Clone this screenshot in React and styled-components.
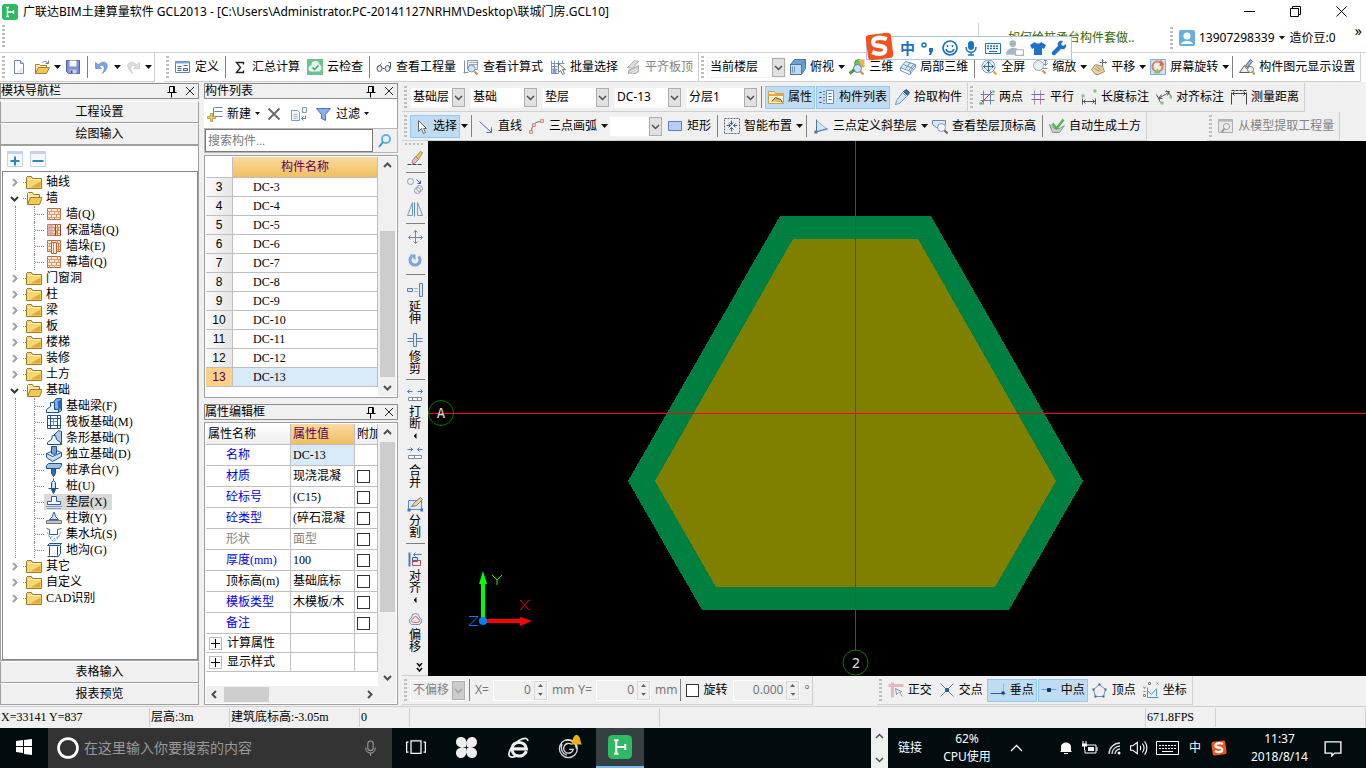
import styled, { createGlobalStyle, css } from "styled-components";

const GlobalStyle = createGlobalStyle`
  * {
    box-sizing: border-box;
  }

  body {
    margin: 0;
    background: #f0f0f0;
    font-family: "Noto Sans", "Noto Sans CJK SC", sans-serif;
    font-size: 12px;
    line-height: 16px;
    color: #000;
  }

  button,
  input,
  select {
    margin: 0;
    padding: 0;
    border: none;
    border-radius: 0;
    background: none;
    font: inherit;
    color: inherit;
  }

  svg {
    display: block;
    flex: none;
  }
`;

const songti = css`
  font-family: "Liberation Serif", "Noto Sans CJK SC", serif;
`;

/* ---------- icons ---------- */

const wall = (
  <>
    <path d="M1 2h13v11H1z" fill="#fdeee0" stroke="#c4643a" />
    <path
      d="M1 5h13M1 8h13M1 11h13M5 2v3M11 2v3M3 5v3M8 5v3M12 5v3M5 8v3M10 8v3M3 11v2M8 11v2"
      stroke="#e39a68"
      fill="none"
    />
  </>
);

const glyphs = {
  fresh: (
    <>
      <path d="M3 1h6l3 3v10H3z" fill="#fff" stroke="#7289a8" />
      <path d="M9 1v3h3" fill="#cfdcef" stroke="#7289a8" />
      <path d="M5 13h6V8z" fill="#dfe8f5" />
    </>
  ),
  open: (
    <>
      <path d="M1 14V5h4l1 1h6v2" fill="#fbe9a6" stroke="#a8842e" />
      <path d="M1 14l3-6h11l-3 6z" fill="#f2c55c" stroke="#a8842e" />
      <path d="M8 3c3-2 4-1 6 1m0-3v3h-3" fill="none" stroke="#5d7ea8" />
    </>
  ),
  save: (
    <>
      <path d="M1 1h13v13H3l-2-2z" fill="#7f8ed8" stroke="#5060ad" />
      <path d="M4 1h7v6H4z" fill="#f4f7fd" />
      <path d="M4 10h7v4H4z" fill="#c9d0ec" />
      <path d="M5 11h2v3H5z" fill="#45529c" />
    </>
  ),
  undo: (
    <path d="M1 3v6h6L5 7c3-3 7 0 3 7 7-5 6-13-1-11L4 5z" fill="#7ba2e6" stroke="#5880cb" strokeWidth=".6" />
  ),
  redo: (
    <path d="M14 3v6H8l2-2C7 4 3 7 7 14 0 9 1 1 8 3l3 2z" fill="#dedede" stroke="#c2c2c2" strokeWidth=".6" />
  ),
  define: (
    <>
      <path d="M0 2h14v11H0z" fill="#fff" stroke="#5f83bd" />
      <path d="M0 2h14v2H0z" fill="#7fa5df" />
      <path d="M2 7h4M2 9h4M2 11h4M8 6h4" stroke="#4d607c" />
      <path d="M8 9h4v2H8z" fill="none" stroke="#4d607c" />
    </>
  ),
  sigma: <path d="M11 5V3H4l4 5-4 5h7v-2" fill="none" stroke="#222" strokeWidth="1.4" />,
  cloudCheck: (
    <>
      <path d="M-1-1h17v17H-1z" fill="#6cc48d" />
      <path d="M4 12a3 3 0 0 1 0-6 4 4 0 0 1 8-1 4 4 0 0 1 0 7z" fill="#e9f7ee" />
      <path d="M5 8l2 2 4-4" fill="none" stroke="#3f9c66" strokeWidth="1.5" />
    </>
  ),
  glasses: (
    <>
      <ellipse cx="3" cy="9" rx="2.500" ry="3" fill="#e4e9ef" stroke="#4f5a68" />
      <ellipse cx="11" cy="9" rx="2.500" ry="3" fill="#e4e9ef" stroke="#4f5a68" />
      <path d="M6 9h2M1 8l4-4M14 9V3h-2" fill="none" stroke="#4f5a68" />
    </>
  ),
  formula: (
    <>
      <path d="M4 1h10v9H4z" fill="#f3f4f7" stroke="#8d95a5" />
      <path d="M6 3h1M8 3h1M10 3h1M12 3h1M6 5h1M8 5h1M10 5h1M12 5h1M6 7h1M8 7h1" stroke="#545e70" />
      <path d="M1 1v13M0 13h5" stroke="#7f93b5" />
      <circle cx="8" cy="9" r="3.500" fill="#cfe4f9" stroke="#7f93b5" />
      <path d="M11 12l3 3" stroke="#d98b3c" strokeWidth="2" />
    </>
  ),
  batch: (
    <>
      <path d="M1 1v13h7M1 4h13M4 1v13M8 1v6M12 1v3M1 7h6M1 10h6" fill="none" stroke="#7d93b5" />
      <path d="M2 9h4v5H2z" fill="#7b9cd2" />
      <path d="M8 4v9l2-2 2 4 2-1-2-4h3z" fill="#fff" stroke="#555" strokeWidth=".8" />
    </>
  ),
  flush: (
    <>
      <path d="M2 8l7-7 4 1-6 7z" fill="#dcdcdc" stroke="#b0b0b0" />
      <path d="M3 14v-3l10-5v6l-3 2z" fill="#c9c9c9" stroke="#b0b0b0" />
      <path d="M5 12l7-3M6 14l6-3" stroke="#f0f0f0" />
    </>
  ),
  cube: (
    <>
      <path d="M0 5l4-5h11v9l-4 6H0z" fill="#6d9fd3" stroke="#4d76a4" />
      <path d="M0 5h11v10H0z" fill="#bcdcf5" stroke="#4d76a4" />
      <path d="M11 5l4-5M2 7v6M4 7v6" stroke="#4d76a4" strokeWidth=".7" />
    </>
  ),
  view3d: (
    <>
      <circle cx="9" cy="4" r="4" fill="#6cbf5b" stroke="#3d8d3a" strokeWidth=".7" />
      <path d="M9 0h6v8h-3z" fill="#e3b54f" />
      <circle cx="8" cy="9" r="4" fill="#cbe4f7" stroke="#5b83aa" />
      <path d="M0 14l5-4" stroke="#4b9a48" strokeWidth="3" />
      <path d="M11 12l3 3" stroke="#d98b3c" strokeWidth="2" />
    </>
  ),
  part3d: (
    <>
      <path d="M0 8l5-6 10 3-5 7z" fill="#e4eef8" stroke="#4a79ac" strokeWidth=".8" />
      <path d="M0 8v3l9 4 6-7V5M3 5l9 4M5 9l5-6M8 11l5-6M10 12v3" fill="none" stroke="#4a79ac" strokeWidth=".8" />
    </>
  ),
  fit: (
    <>
      <circle cx="7" cy="7" r="6.500" fill="#e9f1fb" stroke="#8b96a8" />
      <path d="M7 2v10M2 7h10" stroke="#3566b5" />
      <path d="M5 4l2-2 2 2M5 10l2 2 2-2M4 5L2 7l2 2M10 5l2 2-2 2" fill="none" stroke="#3566b5" />
      <path d="M12 12l3 3" stroke="#e2a23d" strokeWidth="2" />
    </>
  ),
  zoom: (
    <>
      <circle cx="6" cy="6" r="5" fill="#e6f1fb" stroke="#9aa6b6" />
      <path d="M10 11l3 3" stroke="#d98b3c" strokeWidth="2" />
      <path d="M13 0v6M11 2l2-2 2 2M11 4l2 2 2-2M10 9h5" fill="none" stroke="#7a8fb5" />
    </>
  ),
  pan: (
    <>
      <path d="M0 10l4-5 7 2 2 5-6 3H4z" fill="#e8d3a5" stroke="#a48b58" />
      <path d="M3 9l5 3M5 7l5 4" stroke="#a48b58" />
      <path d="M11 0v7M8 3h7M10 1l1-1 1 1M14 2l1 1-1 1" fill="none" stroke="#5c6f8d" />
    </>
  ),
  screenRotate: (
    <>
      <path d="M0 0h15v15H0z" fill="#cce0f6" stroke="#83aee0" />
      <circle cx="7" cy="7" r="5" fill="#e6f2df" stroke="#df7b68" strokeWidth="2" />
      <path d="M3 14l4-5 3 5z" fill="#8ac36a" />
      <path d="M10 0l4 5-5 2z" fill="#df6a55" />
    </>
  ),
  display: (
    <>
      <path d="M0 13l5-7 2 3 3-2v6z" fill="#efefef" stroke="#5d5d5d" />
      <path d="M6 6l5-6 2 2-5 6z" fill="#9bb9e4" stroke="#4d607c" />
      <circle cx="11" cy="10" r="3" fill="#f1f6fb" stroke="#777" />
      <path d="M13 12l2 3" stroke="#d48a38" strokeWidth="2" />
    </>
  ),
  props: (
    <>
      <path d="M0 2h6l1 2h8v10H0z" fill="#fff3cf" stroke="#d0a04a" />
      <path d="M0 5h15v1H0z" fill="#f0a53c" stroke="#f0a53c" />
      <path d="M3 12l4-4 5 2 2 3" fill="#e0b768" stroke="#674c22" />
    </>
  ),
  list: (
    <>
      <path d="M0 3h2M0 8h2M0 13h2M4 2h1M4 5h1M4 8h1M4 11h1M4 14h1" stroke="#333" />
      <path d="M7 1h7v13H7z" fill="#fff" stroke="#6c8fc3" />
      <path d="M9 4h3M9 7h3M9 10h3" stroke="#4068b0" />
    </>
  ),
  pick: (
    <>
      <path d="M9 2l4 4 2-3-3-3z" fill="#3b6cb1" stroke="#27518f" />
      <path d="M8 3l4 4-7 7-4 1 1-4z" fill="#cfe3f7" stroke="#6f97c8" />
    </>
  ),
  twoPoint: (
    <>
      <path d="M4 1v14M11 1v14M1 5h14M1 11h14" stroke="#7187ad" />
      <path d="M2 13L13 2" stroke="#c94b4b" />
      <path d="M0 13h3v2H0zM13 1h2v2h-2z" fill="#50b04c" />
    </>
  ),
  parallel: (
    <>
      <path d="M4 1v14M10 1v14" stroke="#c5849a" />
      <path d="M1 5h13M1 10h13" stroke="#5877b0" />
    </>
  ),
  lengthDim: (
    <>
      <path d="M1 9v6M14 9v6M1 12h13M4 10l-2 2 2 2M11 10l2 2-2 2" fill="none" stroke="#555" />
      <path d="M0 5h3v3H0zM12 0h3v3h-3z" fill="#7cc67d" />
    </>
  ),
  alignDim: (
    <>
      <path d="M0 5l4 8M10 1l5 6M2 9l10-6M5 5L2 9l4 0M9 2l4 0-2 4" fill="none" stroke="#555" />
      <path d="M4 12h3v3H4zM13 6h3v3h-3z" fill="#7cc67d" />
    </>
  ),
  measure: (
    <>
      <path d="M0 1h16" stroke="#333" strokeDasharray="3 1" />
      <path d="M0 3v12M15 3v12M0 4h15M3 2L1 4l2 2M12 2l2 2-2 2" fill="none" stroke="#444" />
    </>
  ),
  cursor: <path d="M5 2v11l3-3 2 5 2-1-2-4h3z" fill="#fff" stroke="#666" />,
  line: (
    <>
      <path d="M1 3l12 11" stroke="#4c72a8" />
      <path d="M13 9v5H8" fill="none" stroke="#4c72a8" />
    </>
  ),
  arc: (
    <>
      <path d="M2 14C2 7 5 3 12 3" fill="none" stroke="#5179b5" />
      <path d="M0 12h3v3H0zM3 5h3v3H3zM11 1h3v3h-3z" fill="#f4c4ba" stroke="#d88577" strokeWidth=".8" />
    </>
  ),
  rect: <path d="M1 3h13v9H1z" fill="#b7cdf6" stroke="#5b7fcb" />,
  smart: (
    <>
      <path d="M0 0h15v15H0z" fill="none" stroke="#5a6a85" strokeDasharray="2 1" />
      <path d="M7 2v4M7 9v4M2 7h4M9 7h4M5 4l2 2 2-2M5 11l2-2 2 2M4 5l2 2-2 2M11 5L9 7l2 2" fill="none" stroke="#3f5f94" />
    </>
  ),
  slope: (
    <>
      <path d="M3 2v11l11-2z" fill="#d5e5f8" stroke="#8fb1de" />
      <path d="M3 1v13M1 14l13-4" stroke="#4b74b3" />
      <path d="M1 12h3v3H1z" fill="#4b74b3" />
    </>
  ),
  topLevel: (
    <>
      <path d="M0 2h13v4l-3 3H4L0 6z" fill="#dce9f7" stroke="#6e86a8" />
      <circle cx="9" cy="9" r="4" fill="#eff6fd" stroke="#8298b6" />
      <path d="M12 12l3 3" stroke="#666" strokeWidth="2" />
    </>
  ),
  earth: (
    <>
      <path d="M0 6l3 8h7l5-7-5 3H5z" fill="#c9cdd3" stroke="#8c929c" />
      <path d="M3 5l4 5 7-9" fill="none" stroke="#4fb84f" strokeWidth="2.500" />
    </>
  ),
  model: (
    <>
      <path d="M0 1h14v13H0z" fill="#e8e8e8" stroke="#adadad" />
      <path d="M0 2h14" stroke="#b5b5b5" strokeWidth="2" />
      <circle cx="8" cy="8" r="3" fill="#f4f4f4" stroke="#999" />
      <path d="M6 10l-3 4" stroke="#999" strokeWidth="2" />
    </>
  ),
  erase: (
    <>
      <path d="M0 14h15" stroke="#34495f" strokeDasharray="4 1" />
      <path d="M8 7l5-6 2 1-4 7z" fill="#f5cf62" stroke="#8e7130" strokeWidth=".8" />
      <path d="M5 10l3-4 3 3-4 4H5z" fill="#f4b7c4" stroke="#8c6c78" strokeWidth=".8" />
    </>
  ),
  copy: (
    <>
      <circle cx="3" cy="3" r="3" fill="none" stroke="#8d9bb0" />
      <circle cx="10" cy="12" r="3" fill="none" stroke="#8d9bb0" />
      <circle cx="12" cy="10" r="3" fill="none" stroke="#8d9bb0" />
      <path d="M9 1l4 4M13 2v3h-3" fill="none" stroke="#3d68b0" />
    </>
  ),
  mirror: (
    <>
      <path d="M5 1v13H0zM10 1v13h5z" fill="#eaf2fb" stroke="#7598c8" />
      <path d="M7 1v14" stroke="#5f88c0" />
    </>
  ),
  move: (
    <path d="M8 1v13M1 8h14M6 3l2-2 2 2M6 12l2 2 2-2M3 6L1 8l2 2M13 6l2 2-2 2" fill="none" stroke="#6d8aa8" />
  ),
  rotate: (
    <>
      <path d="M4 4a5 5 0 1 0 7 0" fill="none" stroke="#7fa3e0" strokeWidth="3" />
      <path d="M2 2h6v6z" fill="#7fa3e0" />
    </>
  ),
  extend: (
    <>
      <path d="M0 6h5v3H0zM12 1h3v13h-3z" fill="#dce9f7" stroke="#5981b6" />
      <path d="M7 6h4M7 9h4" stroke="#5981b6" strokeDasharray="1 1" />
    </>
  ),
  trim: (
    <>
      <path d="M0 6h6M0 9h6M9 6h6M9 9h6" stroke="#5981b6" />
      <path d="M6 1h3v13H6z" fill="#dce9f7" stroke="#5981b6" />
    </>
  ),
  split: (
    <>
      <path d="M0 4h5M2 2L0 4l2 2M10 4h5M13 2l2 2-2 2" fill="none" stroke="#4e7cc9" />
      <path d="M1 10h13v3H1zM5 10v3M10 10v3" fill="#fff" stroke="#7d8da6" />
    </>
  ),
  merge: (
    <>
      <path d="M0 3h5M3 1l2 2-2 2M15 3h-5M12 1l-2 2 2 2" fill="none" stroke="#4e7cc9" />
      <path d="M1 9h13v3H1zM7 9v3" fill="#fff" stroke="#7d8da6" />
    </>
  ),
  cut: (
    <>
      <path d="M1 4h13v9H1z" fill="#dfeafa" stroke="#5c88e0" />
      <path d="M0 12h3v3H0zM13 12h3v3h-3z" fill="#3d6ed0" />
      <path d="M4 10l3-4 6-5 2 2-6 6z" fill="#f0d6a2" stroke="#6b5a41" strokeWidth=".8" />
    </>
  ),
  align: (
    <>
      <path d="M2 1v14" stroke="#4f7bbb" strokeWidth="2" />
      <path d="M5 6h5v4H5z" fill="#dbe7f8" stroke="#4057b0" />
      <path d="M5 9h8v5H5z" fill="none" stroke="#b44c5a" />
      <path d="M6 3h8M8 1L6 3l2 2" fill="none" stroke="#4f7bbb" />
    </>
  ),
  offset: (
    <>
      <path d="M4 14a4 4 0 0 1 0-7 4 4 0 0 1 8 0 4 4 0 0 1 0 7z" fill="#e7f0fa" stroke="#6f93c2" />
      <path d="M6 12a2 2 0 0 1 0-4 2 2 0 0 1 4 0 2 2 0 0 1 0 4z" fill="#fde3df" stroke="#db7065" />
    </>
  ),
  ortho: (
    <>
      <path d="M0 3h15M4 0v15" stroke="#e4b8bb" strokeWidth="3" />
      <path d="M7 6l6 3-2 1 3 4M7 6l1 6 2-2" fill="none" stroke="#8794a6" />
    </>
  ),
  cross: (
    <>
      <path d="M1 1l13 13M14 1L1 14" stroke="#6089c1" />
      <path d="M6 6h3v3H6z" fill="#2d59a3" stroke="#2d59a3" />
    </>
  ),
  perp: (
    <>
      <path d="M13 1v13" stroke="#8fb5e6" />
      <path d="M0 11h15" stroke="#2a5fae" />
      <path d="M11 9h3v3h-3z" fill="#1d3f85" />
    </>
  ),
  mid: (
    <>
      <path d="M0 7h15" stroke="#6b96d2" />
      <path d="M6 6h3v3H6z" fill="#14306d" stroke="#14306d" />
    </>
  ),
  vertex: (
    <>
      <path d="M7 2l6 5-2 7H3L1 7z" fill="none" stroke="#6b93c7" />
      <path d="M6 1h2v2H6zM12 6h2v2h-2zM0 6h2v2H0zM2 13h2v2H2zM10 13h2v2h-2z" fill="#35609f" />
    </>
  ),
  coord: (
    <>
      <path d="M4 5v10h11M4 8l4 4 4-5M13 6v8" fill="none" stroke="#4f93d0" />
      <path d="M5 0h2v2H5zM13 0l2 2m0-2l-2 2M0 4l1 2 1-2M0 9h2M0 12h2v2H0z" fill="none" stroke="#888" />
    </>
  ),
  add: (
    <>
      <path d="M7 1h8M7 5h8M7 10h8M6 1v10" stroke="#6b84ad" fill="none" />
      <path d="M3 7h2v3h3v2H5v3H3v-3H0v-2h3z" fill="#f3d15a" stroke="#b08d33" strokeWidth=".8" />
    </>
  ),
  remove: <path d="M2 2l11 11M13 2L2 13" stroke="#6b6b6b" strokeWidth="2" />,
  duplicate: (
    <>
      <path d="M0 4h6l2 2v8H0z" fill="#f1f5fb" stroke="#8998ad" />
      <path d="M2 8h4M2 10h4M2 12h4" stroke="#a5b3c6" />
      <path d="M11 1h4v5h-4z" fill="#f1f5fb" stroke="#8998ad" />
      <path d="M14 9v3h-4M12 10l-2 2 2 2" fill="none" stroke="#4f7fd6" />
    </>
  ),
  filter: <path d="M0 2h14L9 8v6l-4-2V8z" fill="#8ab0ec" stroke="#4a74bd" />,
  find: (
    <>
      <circle cx="9" cy="6" r="4" fill="#f4faff" stroke="#5eb2ec" strokeWidth="2" />
      <path d="M6 9l-4 5" stroke="#3f8fd4" strokeWidth="2" />
    </>
  ),
  folder: (
    <>
      <path d="M0 3l1-1h4l1 2h9v10H0z" fill="#f8d774" stroke="#a07a28" />
      <path d="M1 5h13" stroke="#fdf3c4" />
      <path d="M14 7v6H4z" fill="#e5a930" />
    </>
  ),
  openFolder: (
    <>
      <path d="M1 13V3l1-1h4l1 2h6v3" fill="#fbe9a8" stroke="#a07a28" />
      <path d="M1 14l3-7h12l-3 7z" fill="#f5c755" stroke="#a07a28" />
    </>
  ),
  wall,
  insulated: (
    <>
      {wall}
      <path d="M1 2h6v11H1z" fill="#d9a0a4" opacity=".7" />
      <path d="M9 2v11M14 2v11" stroke="#a3422c" />
      <path d="M11 2v11" stroke="#d98055" />
    </>
  ),
  stack: (
    <>
      {wall}
      <path d="M5 4h5v11H5z" fill="#fbe9da" stroke="#bf5d33" />
      <path d="M7 4v11M12 4v9" stroke="#d98055" />
    </>
  ),
  beam: (
    <>
      <path d="M5 6l5-6h5v12l-3 2z" fill="#7fb0e3" stroke="#1d4f95" />
      <path d="M0 14v-3l4-3V4h4v7h4v3z" fill="#e8f1fb" stroke="#1d4f95" />
      <path d="M11 3l4-2v9l-3 1z" fill="#2666b6" />
    </>
  ),
  raft: (
    <>
      <path d="M1 1h13v13H1z" fill="#fff" stroke="#1d4f95" />
      <path d="M4 1v13M11 1v13M1 4h13M1 11h13" stroke="#1d4f95" />
      <path d="M7 4v7M4 7h7" stroke="#6b93c7" />
    </>
  ),
  strip: (
    <>
      <path d="M7 5l5-5 3 1v13h-3z" fill="#a9c9ea" stroke="#1d4f95" />
      <path d="M1 14v-2l4-3 1-4h3l1 4 4 3v2z" fill="#f0f6fd" stroke="#1d4f95" />
    </>
  ),
  pad: (
    <>
      <path d="M0 7l6 3 9-4v4l-9 5-6-4z" fill="#cbe0f5" stroke="#1d4f95" />
      <path d="M0 7l5-2M10 4l5 2" stroke="#1d4f95" />
      <path d="M5 0h5v7l-3 1-2-1z" fill="#6fa2d8" stroke="#1d4f95" />
    </>
  ),
  cap: (
    <>
      <path d="M0 3l2-2h13v2l-2 3H0z" fill="#9cc2ea" stroke="#1d4f95" />
      <path d="M5 6h4v5l-2 3-2-3z" fill="#2b6bb8" stroke="#1d4f95" />
    </>
  ),
  pile: (
    <>
      <path d="M5 4l2-2 2 2v6H5z" fill="#cfe2f6" stroke="#1d4f95" />
      <path d="M7 0v2M2 10h10M5 11l2 4 2-4z" fill="#1d4f95" stroke="#1d4f95" />
    </>
  ),
  cushion: (
    <>
      <path d="M5 2h5v5h4v3H1V7h4z" fill="#fff" stroke="#2c5fae" />
      <path d="M0 12h15M1 14h13" stroke="#2c5fae" strokeDasharray="1 1" />
    </>
  ),
  pier: (
    <>
      <path d="M6 6l1-4h1l1 4 3 3H3z" fill="#cfe0f8" stroke="#2c5fd0" />
      <path d="M0 10h15v3H0z" fill="#c4c4c4" stroke="#777" />
    </>
  ),
  sump: (
    <>
      <path d="M0 2l3 1v5h8V3l4-1" fill="none" stroke="#2c5fae" />
      <path d="M1 6l2 5 4 4 5-4 2-5M4 11l2-1M7 13l2-2M10 11l2-1" fill="none" stroke="#5b8ad0" strokeDasharray="2 1" />
    </>
  ),
  ditch: (
    <>
      <path d="M1 3l2-2h12l-2 2z" fill="#cfe0f3" stroke="#1d4f95" />
      <path d="M3 4v9M11 4v9M1 14h11M14 3v8l-2 3" fill="none" stroke="#1d4f95" />
    </>
  ),
  expandAll: (
    <>
      <path d="M0 0h15v15H0z" fill="#f5f8ff" stroke="#c3d2f2" />
      <path d="M0 1h15" stroke="#c3d2f2" strokeWidth="3" />
      <path d="M7.500 5v9M3 9.500h9" stroke="#2c86c2" strokeWidth="2" />
    </>
  ),
  collapseAll: (
    <>
      <path d="M0 0h15v15H0z" fill="#f5f8ff" stroke="#c3d2f2" />
      <path d="M0 1h15" stroke="#c3d2f2" strokeWidth="3" />
      <path d="M2 9.500h11" stroke="#2c86c2" strokeWidth="2" />
    </>
  ),
  pin: <path d="M5 3h5M5 3v6M9 3v6M10 3v6M3 9h9M7 9v5" fill="none" stroke="#000" />,
  close: <path d="M4 4l8 8M12 4l-8 8" stroke="#222" />,
  app: (
    <>
      <rect width="16" height="16" rx="3" fill="#2dba62" />
      <path d="M5.500 3v10M5 8h7M11.500 6v4M4 3.500h3M4 12.500h3" fill="none" stroke="#fff" strokeWidth="1.400" />
    </>
  ),
  avatar: (
    <>
      <rect width="16" height="16" rx="2" fill="#67b0dc" />
      <circle cx="8" cy="6" r="3.500" fill="#fff" />
      <path d="M2 14c1-4 11-4 12 0z" fill="#fff" />
    </>
  ),
  sogou: (
    <>
      <rect x="1" y="1" width="14" height="14" rx="2" fill="#f4511e" transform="rotate(-7 8 8)" />
      <path d="M12 4C7 2 3 4 5 7c1 1 5 0 6 2 1 3-3 4-7 2" fill="none" stroke="#fff" strokeWidth="2.400" />
    </>
  ),
  comma: (
    <>
      <circle cx="4" cy="5" r="2" fill="none" stroke="#1c72c8" strokeWidth="1.500" />
      <path d="M9 8h4v3l-2 4H9l1-3H9z" fill="#1c72c8" />
    </>
  ),
  smile: (
    <>
      <circle cx="8" cy="8" r="7" fill="none" stroke="#1c72c8" strokeWidth="1.700" />
      <path d="M4 9c1 4 7 4 8 0M5.500 5v2M10.500 5v2" fill="none" stroke="#1c72c8" strokeWidth="1.500" />
    </>
  ),
  mic: (
    <>
      <rect x="5" y="1" width="6" height="9" rx="3" fill="#1c72c8" />
      <path d="M3 7c0 7 10 7 10 0M8 12v3M5 15h6" fill="none" stroke="#1c72c8" strokeWidth="1.500" />
    </>
  ),
  keyboard: (
    <>
      <path d="M.5 3.500h15v10H.5z" fill="#fff" stroke="#1c72c8" />
      <path d="M2 6h12M2 8.500h12" stroke="#1c72c8" strokeWidth="1.500" strokeDasharray="2 1" />
      <path d="M4 11.500h8" stroke="#1c72c8" />
    </>
  ),
  person: (
    <>
      <circle cx="6" cy="4" r="3" fill="#a6b4c4" />
      <path d="M0 14c0-8 12-8 12-2v2z" fill="#a6b4c4" />
      <path d="M8.500 9.500h7v5h-7z" fill="#fff" stroke="#a6b4c4" />
    </>
  ),
  shirt: <path d="M5 2c1 2 5 2 6 0l5 3-2 4-2-1v7H4V8L2 9 0 5z" fill="#1c72c8" />,
  wrench: (
    <path d="M15 4l-3 2-2-2 2-3c-4-1-6 2-5 5l-6 6c-1 2 1 4 3 3l6-6c3 1 6-1 5-5z" fill="#1c72c8" />
  ),
  windows: <path d="M0 2l7-1v6H0zM8 1l8-1v7H8zM0 8h7v6l-7-1zM8 8h8v8l-8-1z" fill="#fff" />,
  cortana: <circle cx="8" cy="8" r="6.300" fill="none" stroke="#fff" strokeWidth="1.800" />,
  taskMic: (
    <>
      <rect x="5.500" y="1" width="5" height="9" rx="2.500" fill="none" stroke="#9b9b9b" />
      <path d="M3.500 7c0 7 9 7 9 0M8 12v3" fill="none" stroke="#9b9b9b" />
    </>
  ),
  taskView: <path d="M4 3h8v10H4zM2 4H.500v8H2M14 4h1.500v8H14" fill="none" stroke="#fff" />,
  pinwheel: (
    <path
      d="M7.600 7.600C2 9 0 6 0 4c0-3 2-4 4-4 3 0 5 3 3.600 7.600zM8.400 7.600C7 2 10 0 12 0c3 0 4 2 4 4 0 3-3 5-7.600 3.600zM8.400 8.400C14 7 16 10 16 12c0 3-2 4-4 4-3 0-5-3-3.600-7.600zM7.600 8.400C9 14 6 16 4 16c-3 0-4-2-4-4 0-3 3-5 7.600-3.600z"
      fill="#eee"
    />
  ),
  edge: (
    <>
      <path d="M13.500 10.500c-2 5-10 4.500-10-1.500s9.500-6 10 0h-9" fill="none" stroke="#eee" strokeWidth="2.200" />
      <path d="M14.500 3.500c0-4-7-1-11 4-4 6-2 8.500 3 6.500" fill="none" stroke="#eee" strokeWidth="1.200" />
    </>
  ),
  spiral: (
    <>
      <circle cx="7" cy="9" r="5.500" fill="none" stroke="#ddd" strokeWidth=".8" />
      <path d="M9 6.500a3 3 0 1 0 1 3H7.500M3 6c-1 3 0 6 3 7M5 4c4-1 7 2 7 5" fill="none" stroke="#ddd" strokeWidth=".8" />
      <path d="M8.500 6.500c1.500-1 .5-5 3.500-6 3 1 2 5 3.500 6z" fill="#eab010" />
    </>
  ),
  bell: (
    <>
      <path d="M3 11V7c0-6 10-6 10 0v4l1 1H2z" fill="#fff" />
      <path d="M6 13h4v1H6z" fill="#fff" />
    </>
  ),
  battery: (
    <>
      <path d="M6 5h8v8H3v-3M15 7v4" fill="none" stroke="#fff" />
      <path d="M6 7h6v4H6z" fill="#fff" />
      <path d="M1 1v3M4 1v3M0 4h5v2H0zM2.500 6v4" fill="#fff" stroke="#fff" />
    </>
  ),
  wifi: (
    <>
      <circle cx="13" cy="13" r="1.500" fill="#fff" />
      <path d="M9 14a5 5 0 0 1 5-5M6 14a8 8 0 0 1 8-8M3 14A11 11 0 0 1 14 3" fill="none" stroke="#ddd" strokeWidth="1.300" />
    </>
  ),
  speaker: (
    <path d="M.500 6h2l4-3v10l-4-3h-2zM9 6q1 2 0 4M11 4q3 4 0 8M13 2q4 6 0 12" fill="none" stroke="#fff" />
  ),
  message: <path d="M1 2.500h14v10H9.500L7 15v-2.500H1z" fill="none" stroke="#fff" strokeWidth="1.200" />,
};

/* `sharp` puts whole-number strokes on pixel centres */
function Icon({ name, size = 16, sharp }) {
  return (
    <svg
      width={size}
      height={size}
      viewBox={sharp ? "-0.5 -0.5 16 16" : "0 0 16 16"}
      aria-hidden="true"
    >
      {glyphs[name]}
    </svg>
  );
}

const Chevron = ({ d, color = "#505050", weight = 1.5 }) => (
  <svg width="9" height="9" viewBox="0 0 9 9" aria-hidden="true">
    <path d={d} fill="none" stroke={color} strokeWidth={weight} />
  </svg>
);

const arrows = {
  up: "M1 6l3.500-3.500L8 6",
  down: "M1 3l3.500 3.500L8 3",
  left: "M6 1L2.500 4.500 6 8",
  right: "M3 1l3.500 3.500L3 8",
};

/* ---------- shared controls ---------- */

const Window = styled.div`
  min-height: 100vh;
  display: flex;
  flex-direction: column;
  position: relative;
  overflow: hidden;
`;

const Caret = styled.i`
  flex: none;
  width: 7px;
  height: 4px;
  background: #111;
  clip-path: polygon(0 0, 100% 0, 50% 100%);
`;

const Grip = styled.span`
  flex: none;
  width: 3px;
  height: 22px;
  margin: 0 2px;
  background: repeating-linear-gradient(#bdbdbd 0 2px, transparent 2px 4px);
`;

const Toolbar = styled.div`
  flex: none;
  height: 29px;
  display: flex;
  align-items: center;
  gap: 1px;
  padding-right: 2px;
  margin-left: ${({ $before }) => $before || 0}px;
  border-right: 1px solid #d0d0d0;
  border-bottom: 1px solid #d0d0d0;
  background: ${({ $white }) => ($white ? "#fff" : "#f0f0f0")};
  white-space: nowrap;
`;

const ToolbarRow = styled.div`
  flex: none;
  display: flex;
  background: ${({ $white }) => ($white ? "#fff" : "#f0f0f0")};
`;

const Separator = styled.span`
  flex: none;
  width: 1px;
  height: 22px;
  margin: 0 2px;
  background: #808080;
`;

const ToolButton = styled.button`
  flex: none;
  height: 23px;
  display: flex;
  align-items: center;
  gap: 4px;
  padding: 0 ${({ $menu }) => ($menu ? 0 : 3)}px 0 3px;
  color: ${({ disabled }) => (disabled ? "#838383" : "#000")};

  ${({ $active }) =>
    $active &&
    css`
      padding: 0 2px;
      border: 1px solid #90c8f6;
      background: #c0dcf3;
    `}
`;

const Tool = ({ icon, label, menu, active, disabled, title }) => (
  <ToolButton $menu={menu} $active={active} disabled={disabled} aria-label={title}>
    <Icon name={icon} sharp />
    {label}
    {menu && <Caret />}
  </ToolButton>
);

const ComboBox = styled.span`
  flex: none;
  display: grid;
  grid-template-columns: 1fr 13px;
  width: ${({ $width }) => $width}px;
  height: 21px;
  border: 1px solid ${({ $off }) => ($off ? "#fff" : "#f4f4f4")};
  background: ${({ $off }) => ($off ? "#f0f0f0" : "#fff")};

  & + & {
    margin-left: 3px;
  }

  select {
    grid-area: 1 / 1 / 2 / 3;
    appearance: none;
    padding-left: 2px;
    color: ${({ $off }) => ($off ? "#838383" : "#000")};
    opacity: 1;
  }
`;

const ComboArrow = styled.span`
  grid-area: 1 / 2;
  display: grid;
  place-items: center;
  border: 1px solid #adadad;
  background: ${({ $off }) => ($off ? "#ccc" : "#e1e1e1")};
  pointer-events: none;
`;

const Combo = ({ value, label, width, off }) => (
  <ComboBox $width={width} $off={off}>
    <select aria-label={label} disabled={off}>
      <option>{value}</option>
    </select>
    <ComboArrow $off={off}>
      <Chevron d={arrows.down} color={off ? "#a0a0a0" : "#505050"} />
    </ComboArrow>
  </ComboBox>
);

/* ---------- title and menu ---------- */

const TitleBar = styled.header`
  flex: none;
  height: 23px;
  display: flex;
  align-items: center;
  padding-left: 2px;
  background: #fff;
`;

const Title = styled.h1`
  flex: 1;
  margin: 0 0 0 5px;
  font-size: 12px;
  font-weight: 400;
  white-space: nowrap;
`;

const WindowButton = styled.button`
  width: 46px;
  height: 22px;
  display: grid;
  place-items: center;

  &:last-child {
    margin-right: 2px;
  }
`;

const MenuRow = styled.div`
  flex: none;
  height: 30px;
  display: flex;
  border-bottom: 1px solid #d0d0d0;
  background: #fff;
`;

const MenuSpace = styled.div`
  flex: 1;
  padding-top: 2px;
`;

const Tip = styled.a`
  width: 190px;
  padding: 7px 0 0 29px;
  border-left: 1px solid #d0d0d0;
  color: #360;
  text-decoration: none;
`;

const Account = styled.div`
  width: 198px;
  display: flex;
  align-items: center;
  gap: 4px;
`;

const More = styled.span`
  align-self: flex-start;
  margin-left: auto;
  padding-right: 4px;
  font-size: 14px;
`;

const ImeBar = styled.div`
  position: absolute;
  top: 36px;
  right: 294px;
  width: 206px;
  height: 24px;
  display: flex;
  align-items: center;
  justify-content: space-between;
  padding: 0 4px 0 33px;
  border: 1px solid #a9c6e3;
  background: #fff;
  color: #1c72c8;
  font-size: 15px;
  font-weight: 700;
`;

const ImeLogo = styled.span`
  position: absolute;
  top: -5px;
  left: -2px;
`;

const WindowHeader = () => (
  <>
    <TitleBar>
      <Icon name="app" />
      <Title>
        广联达BIM土建算量软件 GCL2013 - [C:\Users\Administrator.PC-20141127NRHM\Desktop\联城门房.GCL10]
      </Title>
      <WindowButton aria-label="最小化">
        <svg width="11" height="11">
          <path d="M0 5.500h11" stroke="#000" />
        </svg>
      </WindowButton>
      <WindowButton aria-label="还原">
        <svg width="11" height="11">
          <path d="M.5 2.500h8v8h-8zM2.500 2.500v-2h8v8h-2" fill="none" stroke="#000" />
        </svg>
      </WindowButton>
      <WindowButton aria-label="关闭">
        <svg width="11" height="11">
          <path d="M.5.5l10 10M10.500.5l-10 10" stroke="#000" />
        </svg>
      </WindowButton>
    </TitleBar>
    <MenuRow>
      <MenuSpace>
        <Grip as="div" />
      </MenuSpace>
      <Tip href="#tip">如何给桩承台构件套做..</Tip>
      <Account>
        <Grip />
        <Icon name="avatar" />
        13907298339
        <Caret />
        造价豆:0
        <More>»</More>
      </Account>
    </MenuRow>
    <ImeBar>
      <ImeLogo>
        <Icon name="sogou" size={29} />
      </ImeLogo>
      中
      <Icon name="comma" />
      <Icon name="smile" />
      <Icon name="mic" />
      <Icon name="keyboard" />
      <Icon name="person" size={18} />
      <Icon name="shirt" />
      <Icon name="wrench" />
    </ImeBar>
  </>
);

const MainToolbar = () => (
  <ToolbarRow $white>
    <Toolbar $white>
      <Grip />
      <Tool icon="fresh" title="新建" />
      <Tool icon="open" title="打开" menu />
      <Tool icon="save" title="保存" />
      <Separator />
      <Tool icon="undo" title="撤销" menu />
      <Tool icon="redo" title="恢复" menu />
    </Toolbar>
    <Toolbar $white $before={9}>
      <Grip />
      <Tool icon="define" label="定义" />
      <Separator />
      <Tool icon="sigma" label="汇总计算" />
      <Tool icon="cloudCheck" label="云检查" />
      <Separator />
      <Tool icon="glasses" label="查看工程量" />
      <Tool icon="formula" label="查看计算式" />
      <Tool icon="batch" label="批量选择" />
      <Tool icon="flush" label="平齐板顶" disabled />
    </Toolbar>
    <Toolbar $white>
      <Grip />
      <Combo label="楼层" value="当前楼层" width={79} />
      <Tool icon="cube" label="俯视" menu />
      <Tool icon="view3d" label="三维" />
      <Tool icon="part3d" label="局部三维" />
      <Separator />
      <Tool icon="fit" label="全屏" />
      <Tool icon="zoom" label="缩放" menu />
      <Tool icon="pan" label="平移" menu />
      <Tool icon="screenRotate" label="屏幕旋转" menu />
      <Separator />
      <Tool icon="display" label="构件图元显示设置" />
    </Toolbar>
  </ToolbarRow>
);

/* ---------- docked panels ---------- */

const Body = styled.main`
  flex: 1;
  display: flex;
  padding-top: 1px;
`;

const Dock = styled.section`
  flex: none;
  width: ${({ $width }) => $width}px;
  display: flex;
  flex-direction: column;
  margin-right: ${({ $after }) => $after}px;
  ${songti}
`;

const PanelTitle = styled.h2`
  flex: none;
  height: 16px;
  display: flex;
  align-items: center;
  margin: ${({ $gap }) => $gap || 0}px 0 0;
  border: 1px solid #8c8c8c;
  font-size: 12px;
  font-weight: 400;
  line-height: 14px;

  span {
    flex: 1;
  }

  button {
    margin-left: 2px;
  }
`;

const PanelHead = ({ children, gap }) => (
  <PanelTitle $gap={gap}>
    <span>{children}</span>
    <button aria-label="固定">
      <Icon name="pin" sharp />
    </button>
    <button aria-label="关闭面板">
      <Icon name="close" />
    </button>
  </PanelTitle>
);

const NavButton = styled.button`
  flex: none;
  height: 22px;
  border: 1px solid #a0a0a0;
  border-top-color: #fff;
  text-align: center;

  h2 + & {
    margin-top: 2px;
  }
`;

const NavBody = styled.div`
  flex: 1;
  display: flex;
  flex-direction: column;
  border: 1px solid #a0a0a0;
  background: #fff;
`;

const TreeTools = styled.div`
  height: 25px;
  display: flex;
  align-items: center;
  gap: 7px;
  padding-left: 6px;
`;

const Tree = styled.ul`
  flex: 1;
  margin: 0 0 0 1px;
  padding: 2px 0 0 7px;
  border: 1px solid #828790;
  list-style: none;
  white-space: nowrap;

  ul {
    margin: 0 0 0 5px;
    padding: 0 0 0 18px;
    border-left: 1px dotted #888;
    list-style: none;
  }
`;

const TreeRow = styled.div`
  height: 16px;
  display: flex;
  align-items: center;
  gap: 4px;
`;

const Dash = styled.i`
  width: 3px;
  margin-right: -4px;
  border-top: 1px dotted #888;
`;

const Leaf = styled.li`
  height: 16px;
  display: flex;
  align-items: center;
  border-left: 1px dotted #888;

  &::before {
    content: "";
    width: 9px;
    border-top: 1px dotted #888;
  }
`;

const LeafLabel = styled.span`
  height: 16px;
  display: flex;
  align-items: center;
  gap: 4px;
  padding: 0 5px 0 2px;
  background: ${({ $selected }) => ($selected ? "#d9d9d9" : "none")};
`;

const tree = [
  { name: "轴线" },
  {
    name: "墙",
    items: [
      ["wall", "墙(Q)"],
      ["insulated", "保温墙(Q)"],
      ["stack", "墙垛(E)"],
      ["wall", "幕墙(Q)"],
    ],
  },
  { name: "门窗洞" },
  { name: "柱" },
  { name: "梁" },
  { name: "板" },
  { name: "楼梯" },
  { name: "装修" },
  { name: "土方" },
  {
    name: "基础",
    items: [
      ["beam", "基础梁(F)"],
      ["raft", "筏板基础(M)"],
      ["strip", "条形基础(T)"],
      ["pad", "独立基础(D)"],
      ["cap", "桩承台(V)"],
      ["pile", "桩(U)"],
      ["cushion", "垫层(X)"],
      ["pier", "柱墩(Y)"],
      ["sump", "集水坑(S)"],
      ["ditch", "地沟(G)"],
    ],
  },
  { name: "其它" },
  { name: "自定义" },
  { name: "CAD识别" },
];

const Navigator = () => (
  <Dock $width={199} $after={5}>
    <PanelHead>模块导航栏</PanelHead>
    <NavButton>工程设置</NavButton>
    <NavButton>绘图输入</NavButton>
    <NavBody>
      <TreeTools>
        <button aria-label="全部展开">
          <Icon name="expandAll" sharp />
        </button>
        <button aria-label="全部折叠">
          <Icon name="collapseAll" sharp />
        </button>
      </TreeTools>
      <Tree>
        {tree.map(({ name, items }) => (
          <li key={name}>
            <TreeRow>
              <Chevron
                d={items ? arrows.down : arrows.right}
                color={items ? "#333" : "#a0a0a0"}
                weight={2}
              />
              <Dash />
              <Icon name={items ? "openFolder" : "folder"} sharp />
              {name}
            </TreeRow>
            {items && (
              <ul>
                {items.map(([icon, label]) => (
                  <Leaf key={label}>
                    <LeafLabel $selected={label === "垫层(X)"}>
                      <Icon name={icon} sharp />
                      {label}
                    </LeafLabel>
                  </Leaf>
                ))}
              </ul>
            )}
          </li>
        ))}
      </Tree>
    </NavBody>
    <NavButton>表格输入</NavButton>
    <NavButton>报表预览</NavButton>
  </Dock>
);

const PartTools = styled.div`
  flex: none;
  height: 29px;
  display: flex;
  align-items: center;
  gap: 3px;
  background: #fff;
  border-right: 1px solid #a0a0a0;
  font-family: "Noto Sans", "Noto Sans CJK SC", sans-serif;

  ${Caret} {
    width: 5px;
    height: 3px;
  }
`;

const SearchRow = styled.div`
  flex: none;
  height: 25px;
  display: flex;
  border: 1px solid #b8b8b8;

  input {
    flex: 1;
    min-width: 0;
    padding: 0 2px;
    border: 1px solid #7a7a7a;
    background: #fff;
  }

  input::placeholder {
    color: #7b7b7b;
  }

  button {
    width: 24px;
    display: grid;
    place-items: center;
  }
`;

const Frame = styled.div`
  display: grid;
  grid-template-columns: minmax(0, 1fr) 18px;
  grid-template-rows: minmax(0, 1fr) auto;
  flex: ${({ $fill }) => ($fill ? "1" : "0 0 243px")};
  margin-top: 2px;
  padding: 1px;
  border: 1px solid #a0a0a0;
  background: #fff;
`;

const ScrollY = styled.div`
  display: flex;
  flex-direction: column;
  align-items: center;
  justify-content: space-between;
  padding: 4px 0;
  background: #f0f0f0;
`;

const ScrollX = styled.div`
  height: 17px;
  display: flex;
  align-items: center;
  gap: 5px;
  padding: 0 4px;
  background: #f0f0f0;

  svg:last-child {
    margin-left: auto;
  }
`;

const ThumbY = styled.i`
  width: 15px;
  height: ${({ $size }) => $size}px;
  margin: ${({ $end }) => ($end ? "auto 0 6px" : "5px 0 auto")};
  background: #cdcdcd;
`;

const ThumbX = styled.i`
  width: 45px;
  height: 15px;
  background: #cdcdcd;
`;

const Corner = styled.div`
  background: #f0f0f0;
`;

const Grid = styled.table`
  align-self: start;
  width: 100%;
  border-spacing: 0;
  table-layout: fixed;
  overflow: hidden;
  line-height: 16px;

  th,
  td {
    padding: 0;
    border-right: 1px solid #bfbfbf;
    border-bottom: 1px solid #bfbfbf;
    font-weight: 400;
    text-align: left;
    white-space: nowrap;
    overflow: hidden;
  }
`;

const gold = css`
  background: linear-gradient(#fcd9a0, #f0bf60);
  color: #5c0057;
`;

const PartGrid = styled(Grid)`
  th:first-child {
    width: 27px;
  }

  thead th {
    height: 21px;
  }

  thead th:last-child {
    ${gold}
    text-align: center;
  }

  tbody th {
    background: linear-gradient(90deg, #fafafa, #e6e6e6);
    font-family: "Liberation Sans", sans-serif;
    text-align: center;
  }

  tbody th,
  td {
    height: 19px;
  }

  td {
    padding-left: 20px;
  }

  tr[aria-selected="true"] {
    th {
      background: #ffd08a;
      color: #5c0057;
    }

    td {
      background: #d8eaf8;
    }
  }
`;

const parts = [3, 4, 5, 6, 7, 8, 9, 10, 11, 12, 13];

const PropGrid = styled(Grid)`
  th:first-child {
    width: 85px;
  }

  th:nth-child(2) {
    width: 64px;
    ${gold}
  }

  th {
    height: 21px;
    padding-left: 2px;
    background: linear-gradient(#fff, #eee);
  }
`;

const PropRow = styled.tr`
  td {
    height: ${({ $group }) => ($group ? 19 : 21)}px;
    padding-left: 2px;
    color: ${({ $tone }) => ($tone === "gray" ? "#838383" : "#000")};
  }

  td:first-child {
    padding-left: ${({ $group }) => ($group ? 3 : 20)}px;
    color: ${({ $tone }) => ({ blue: "#00e", gray: "#838383" })[$tone] || "#000"};
  }

  &[aria-selected="true"] td:nth-child(2) {
    background: #d8eaf8;
  }
`;

const GroupName = styled.span`
  display: flex;
  align-items: center;
  gap: 5px;

  button {
    width: 13px;
    height: 13px;
    border: 1px solid #bcbcbc;
    display: grid;
    place-items: center;
  }
`;

const Tick = styled.input.attrs({ type: "checkbox" })`
  appearance: none;
  display: block;
  flex: none;
  width: 13px;
  height: 13px;
  border: 1px solid #333;
  background: #fff;
`;

const properties = [
  ["名称", "DC-13", "blue"],
  ["材质", "现浇混凝", "blue"],
  ["砼标号", "(C15)", "blue"],
  ["砼类型", "(碎石混凝", "blue"],
  ["形状", "面型", "gray"],
  ["厚度(mm)", "100", "blue"],
  ["顶标高(m)", "基础底标", "black"],
  ["模板类型", "木模板/木", "blue"],
  ["备注", "", "blue"],
];

const Components = () => (
  <Dock $width={194} $after={4}>
    <PanelHead>构件列表</PanelHead>
    <PartTools>
      <Tool icon="add" label="新建" menu />
      <Tool icon="remove" title="删除" />
      <Tool icon="duplicate" title="复制" />
      <Tool icon="filter" label="过滤" menu />
    </PartTools>
    <SearchRow>
      <input type="text" aria-label="搜索构件" placeholder="搜索构件..." />
      <button aria-label="搜索">
        <Icon name="find" />
      </button>
    </SearchRow>
    <Frame>
      <PartGrid>
        <thead>
          <tr>
            <th />
            <th>构件名称</th>
          </tr>
        </thead>
        <tbody>
          {parts.map((n) => (
            <tr key={n} aria-selected={n === 13}>
              <th>{n}</th>
              <td>DC-{n}</td>
            </tr>
          ))}
        </tbody>
      </PartGrid>
      <ScrollY>
        <Chevron d={arrows.up} weight={2} />
        <ThumbY $size={146} $end />
        <Chevron d={arrows.down} weight={2} />
      </ScrollY>
    </Frame>
    <PanelHead gap={6}>属性编辑框</PanelHead>
    <Frame $fill>
      <PropGrid>
        <thead>
          <tr>
            <th>属性名称</th>
            <th>属性值</th>
            <th>附加</th>
          </tr>
        </thead>
        <tbody>
          {properties.map(([name, value, tone], i) => (
            <PropRow key={name} $tone={tone} aria-selected={i === 0}>
              <td>{name}</td>
              <td>{value}</td>
              <td>{i > 0 && <Tick aria-label={`附加${name}`} />}</td>
            </PropRow>
          ))}
          {["计算属性", "显示样式"].map((name) => (
            <PropRow key={name} $group>
              <td>
                <GroupName>
                  <button aria-label={`展开${name}`}>
                    <svg width="9" height="9">
                      <path d="M0 4.500h9M4.500 0v9" stroke="#000" />
                    </svg>
                  </button>
                  {name}
                </GroupName>
              </td>
              <td />
              <td />
            </PropRow>
          ))}
        </tbody>
      </PropGrid>
      <ScrollY>
        <Chevron d={arrows.up} weight={2} />
        <ThumbY $size={170} />
        <Chevron d={arrows.down} weight={2} />
      </ScrollY>
      <ScrollX>
        <Chevron d={arrows.left} weight={2} />
        <ThumbX />
        <Chevron d={arrows.right} weight={2} />
      </ScrollX>
      <Corner />
    </Frame>
  </Dock>
);

/* ---------- drawing area ---------- */

const Workspace = styled.section`
  flex: 1;
  min-width: 0;
  display: flex;
  flex-direction: column;
`;

const DrawRow = styled.div`
  flex: 1;
  display: flex;
`;

const SideBar = styled.div`
  flex: none;
  width: 26px;
  display: flex;
  flex-direction: column;
  align-items: center;
  border-bottom: 1px solid #d0d0d0;
`;

const SideGrip = styled.span`
  width: 20px;
  height: 2px;
  margin: 2px 0;
  background: repeating-linear-gradient(90deg, #bdbdbd 0 2px, transparent 2px 4px);
`;

const SideRule = styled.span`
  width: 19px;
  height: 1px;
  margin: 2px 0;
  background: #808080;
`;

const SideButton = styled.button`
  width: 24px;
  display: flex;
  flex-direction: column;
  align-items: center;
  gap: 3px;
  padding: ${({ $text }) => ($text ? "5px 5px 2px" : "3px 4px 4px")};
  line-height: 12px;

  ${Caret} {
    width: 3px;
    height: 6px;
    clip-path: polygon(100% 0, 100% 100%, 0 50%);
  }
`;

const SideTool = ({ icon, label, title, menu }) => (
  <SideButton $text={label} aria-label={title}>
    <Icon name={icon} sharp />
    {label}
    {menu && <Caret />}
  </SideButton>
);

const SideMore = styled.span`
  margin: auto 4px 3px auto;
`;

const Canvas = styled.div`
  flex: 1;
  min-width: 0;
  background: #000;

  svg {
    width: 100%;
    height: 100%;
  }

  text {
    font-family: "DejaVu Sans Mono", monospace;
  }
`;

const Drawing = () => (
  <Canvas>
    <svg viewBox="0 0 938 535" role="img" aria-label="垫层平面图">
      <g shapeRendering="crispEdges">
        <path d="M352 75h151l152 265-74 129H274L200 340z" fill="#008040" />
        <path d="M365 98h125l138 242-61 106H288l-61-106z" fill="#808000" />
        <path d="M0 272.500h938M427.500 0v272" stroke="#f00" />
        <path d="M427.500 273v237" stroke="#008000" />
      </g>
      <circle cx="13" cy="272" r="12.500" fill="none" stroke="#008000" />
      <circle cx="427.500" cy="521.500" r="12.500" fill="none" stroke="#008000" />
      <text x="13" y="277" fill="#ddd" fontSize="14" textAnchor="middle">
        A
      </text>
      <text x="428" y="527" fill="#ddd" fontSize="14" textAnchor="middle">
        2
      </text>
      <path d="M53 442h4v38h-4zM51 443l4-13 4 13z" fill="#0f0" />
      <path d="M55 478h38v4H55zM92 476l12 4-12 5z" fill="#f00" />
      <circle cx="55" cy="480" r="4" fill="#0080ff" />
      <path d="M64 434l5 5 5-5M69 439v5" fill="none" stroke="#0f0" />
      <path d="M92 459l9 10M101 459l-9 10" stroke="#f00" />
      <path d="M41 475.500h9l-9 9h9" fill="none" stroke="#0080ff" />
    </svg>
  </Canvas>
);

const Field = styled.label`
  display: flex;
  align-items: center;
  gap: 4px;
  padding-left: ${({ $inset }) => $inset || 0}px;
  color: ${({ $on }) => ($on ? "#000" : "#777")};
`;

const NumberBox = styled.span`
  display: flex;
  width: ${({ $width }) => $width}px;
  height: 21px;
  border: 1px solid #fff;

  input {
    flex: 1;
    min-width: 0;
    padding-right: 3px;
    text-align: right;
    color: #777;
  }
`;

const Spinner = styled.span`
  width: 13px;
  display: flex;
  flex-direction: column;
  align-items: center;
  justify-content: space-around;
  border: 1px solid #d9d9d9;

  ${Caret} {
    width: 5px;
    height: 3px;
    background: #606060;
  }

  ${Caret}:first-child {
    transform: rotate(180deg);
  }
`;

const NumberInput = ({ label, value, width }) => (
  <NumberBox $width={width}>
    <input type="text" aria-label={label} defaultValue={value} disabled />
    <Spinner>
      <Caret />
      <Caret />
    </Spinner>
  </NumberBox>
);

const DrawingArea = () => (
  <Workspace>
    <ToolbarRow>
      <Toolbar>
        <Grip />
        <Combo label="楼层" value="基础层" width={56} />
        <Combo label="构件类别" value="基础" width={68} />
        <Combo label="构件类型" value="垫层" width={68} />
        <Combo label="构件" value="DC-13" width={68} />
        <Combo label="分层" value="分层1" width={72} />
        <Separator />
        <Tool icon="props" label="属性" active />
        <Tool icon="list" label="构件列表" active />
        <Tool icon="pick" label="拾取构件" />
      </Toolbar>
      <Toolbar>
        <Grip />
        <Tool icon="twoPoint" label="两点" />
        <Tool icon="parallel" label="平行" />
        <Tool icon="lengthDim" label="长度标注" />
        <Tool icon="alignDim" label="对齐标注" />
        <Tool icon="measure" label="测量距离" />
      </Toolbar>
    </ToolbarRow>
    <ToolbarRow>
      <Toolbar>
        <Grip />
        <Tool icon="cursor" label="选择" active />
        <Caret />
        <Separator />
        <Tool icon="line" label="直线" />
        <Tool icon="arc" label="三点画弧" menu />
        <Combo label="画弧方式" value="" width={54} />
        <Tool icon="rect" label="矩形" />
        <Separator />
        <Tool icon="smart" label="智能布置" menu />
        <Separator />
        <Tool icon="slope" label="三点定义斜垫层" menu />
        <Tool icon="topLevel" label="查看垫层顶标高" />
        <Separator />
        <Tool icon="earth" label="自动生成土方" />
      </Toolbar>
      <Toolbar $before={60}>
        <Grip />
        <Tool icon="model" label="从模型提取工程量" disabled />
      </Toolbar>
    </ToolbarRow>
    <DrawRow>
      <SideBar>
        <SideGrip />
        <SideTool icon="erase" title="删除" />
        <SideRule />
        <SideTool icon="copy" title="复制" />
        <SideTool icon="mirror" title="镜像" />
        <SideRule />
        <SideTool icon="move" title="移动" />
        <SideTool icon="rotate" title="旋转" />
        <SideRule />
        <SideTool icon="extend" label="延伸" />
        <SideTool icon="trim" label="修剪" />
        <SideRule />
        <SideTool icon="split" label="打断" menu />
        <SideTool icon="merge" label="合并" />
        <SideTool icon="cut" label="分割" />
        <SideRule />
        <SideTool icon="align" label="对齐" menu />
        <SideTool icon="offset" label="偏移" />
        <SideMore>
          <svg width="9" height="9">
            <path d="M2 0l2.500 3L7 0M2 5l2.500 3L7 5" fill="none" stroke="#000" strokeWidth="1.500" />
          </svg>
        </SideMore>
      </SideBar>
      <Drawing />
    </DrawRow>
    <ToolbarRow>
      <Toolbar>
        <Grip />
        <Combo label="偏移方式" value="不偏移" width={56} off />
        <Separator />
        <Field $inset={2}>
          X= <NumberInput label="X" value="0" width={55} /> mm
        </Field>
        <Field $inset={3}>
          Y= <NumberInput label="Y" value="0" width={55} /> mm
        </Field>
        <Separator />
        <Field $on $inset={2}>
          <Tick />
          旋转
        </Field>
        <Field $inset={5}>
          <NumberInput label="旋转角度" value="0.000" width={67} /> °
        </Field>
      </Toolbar>
      <Toolbar $before={64}>
        <Grip />
        <Tool icon="ortho" label="正交" />
        <Tool icon="cross" label="交点" />
        <Tool icon="perp" label="垂点" active />
        <Tool icon="mid" label="中点" active />
        <Tool icon="vertex" label="顶点" />
        <Tool icon="coord" label="坐标" />
      </Toolbar>
    </ToolbarRow>
  </Workspace>
);

/* ---------- status bar and taskbar ---------- */

const StatusBar = styled.footer`
  flex: none;
  height: 22px;
  display: flex;
  align-items: center;
  margin-top: 1px;
  border-top: 1px solid #d0d0d0;
  white-space: nowrap;
  ${songti}
`;

const StatusCell = styled.span`
  flex: ${({ $width }) => ($width ? `0 0 ${$width}px` : "1")};
  height: 19px;
  padding-left: 1px;
  border-right: 1px solid #d0d0d0;
  line-height: 19px;
`;

const Taskbar = styled.nav`
  flex: none;
  height: 40px;
  display: flex;
  background: #020c0f;
  color: #fff;
  white-space: nowrap;
`;

const TaskButton = styled.button`
  width: ${({ $width }) => $width || 52}px;
  display: grid;
  place-items: center;
  background: ${({ $active }) => ($active ? "#363f42" : "none")};
  border-bottom: 2px solid ${({ $active }) => ($active ? "#76b9ed" : "transparent")};
`;

const TaskSearch = styled.label`
  width: 344px;
  display: flex;
  align-items: center;
  gap: 4px;
  padding: 0 13px 0 8px;
  background: #333;

  input {
    flex: 1;
    min-width: 0;
    font-size: 14px;
  }

  input::placeholder {
    color: #999;
    opacity: 1;
  }
`;

const Tray = styled.div`
  margin-left: auto;
  display: flex;
  align-items: center;
  gap: 8px;
  padding-right: 24px;
`;

const TrayScroll = styled.span`
  align-self: stretch;
  width: 17px;
  display: flex;
  flex-direction: column;
  align-items: center;
  justify-content: space-between;
  padding: 4px 0;
  background: #f0f0f0;
`;

const TrayText = styled.span`
  width: ${({ $width }) => $width}px;
  text-align: center;
  line-height: 18px;
`;

const TrayKeyboard = () => (
  <svg width="23" height="14">
    <path d="M.5.500h22v13H.5z" fill="none" stroke="#fff" />
    <path d="M3 4.500h17M3 7.500h17" stroke="#fff" strokeDasharray="2 1" />
    <path d="M6 10.500h11" stroke="#fff" />
  </svg>
);

export default function App() {
  return (
    <Window>
      <GlobalStyle />
      <WindowHeader />
      <MainToolbar />
      <Body>
        <Navigator />
        <Components />
        <DrawingArea />
      </Body>
      <StatusBar>
        <StatusCell $width={150}>X=33141 Y=837</StatusCell>
        <StatusCell $width={80}>层高:3m</StatusCell>
        <StatusCell $width={130}>建筑底标高:-3.05m</StatusCell>
        <StatusCell $width={50}>0</StatusCell>
        <StatusCell $width={250} />
        <StatusCell />
        <StatusCell $width={70}>671.8FPS</StatusCell>
        <StatusCell $width={150} />
      </StatusBar>
      <Taskbar>
        <TaskButton $width={48} aria-label="开始">
          <Icon name="windows" />
        </TaskButton>
        <TaskSearch>
          <Icon name="cortana" size={24} />
          <input type="text" aria-label="搜索" placeholder="在这里输入你要搜索的内容" />
          <Icon name="taskMic" size={17} />
        </TaskSearch>
        <TaskButton $width={48} aria-label="任务视图">
          <Icon name="taskView" size={20} />
        </TaskButton>
        <TaskButton aria-label="浏览器">
          <Icon name="pinwheel" size={21} />
        </TaskButton>
        <TaskButton aria-label="Edge">
          <Icon name="edge" size={23} />
        </TaskButton>
        <TaskButton aria-label="通知">
          <Icon name="spiral" size={26} />
        </TaskButton>
        <TaskButton $width={48} $active aria-label="广联达">
          <Icon name="app" size={24} />
        </TaskButton>
        <Tray>
          <TrayScroll>
            <Chevron d={arrows.up} />
            <Chevron d={arrows.down} />
          </TrayScroll>
          <TrayText $width={28}>链接</TrayText>
          <TrayText $width={70}>
            62%
            <br />
            CPU使用
          </TrayText>
          <TrayText $width={14}>
            <svg width="13" height="8">
              <path d="M1 7l5.500-5.500L12 7" fill="none" stroke="#fff" strokeWidth="1.300" />
            </svg>
          </TrayText>
          <TrayText $width={18} />
          <Icon name="bell" />
          <Icon name="battery" />
          <Icon name="wifi" />
          <Icon name="speaker" size={18} />
          <TrayKeyboard />
          <TrayText $width={16}>中</TrayText>
          <TrayText $width={24}>
            <Icon name="sogou" />
          </TrayText>
          <TrayText $width={73}>
            11:37
            <br />
            2018/8/14
          </TrayText>
          <Icon name="message" size={18} />
        </Tray>
      </Taskbar>
    </Window>
  );
}
